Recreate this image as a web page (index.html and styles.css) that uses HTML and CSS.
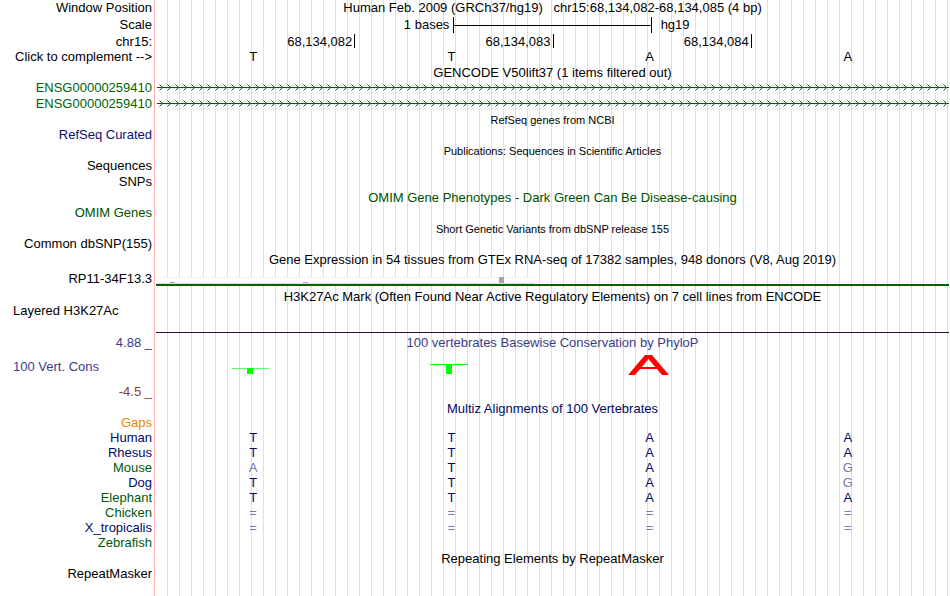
FILE: index.html
```html
<!DOCTYPE html>
<html lang="en">
<head>
    <meta charset="UTF-8">
    <meta name="viewport" content="width=device-width, initial-scale=1.0">
    <title>Human chr15:68,134,082-68,134,085 Genome Browser</title>
    <link rel="stylesheet" href="styles.css">
</head>
<body>
    <main class="browser">
        <!-- Position and ruler -->
        <div class="row ruler">
            <span class="label">Window Position</span>
            <h1 class="position">Human Feb. 2009 (GRCh37/hg19) &nbsp; chr15:68,134,082-68,134,085 (4 bp)</h1>
        </div>
        <div class="row ruler scale-row">
            <span class="label">Scale</span>
            <div class="scale">
                <span class="scale-size">1 bases</span>
                <span class="scale-bar"></span>
                <span class="scale-db">hg19</span>
            </div>
        </div>
        <div class="row ruler">
            <span class="label">chr15:</span>
            <div class="bases ticks">
                <span>68,134,082</span>
                <span>68,134,083</span>
                <span>68,134,084</span>
                <span></span>
            </div>
        </div>
        <div class="row">
            <button type="button" class="label">Click to complement --&gt;</button>
            <div class="bases letters">
                <span>T</span>
                <span>T</span>
                <span>A</span>
                <span>A</span>
            </div>
        </div>

        <!-- GENCODE -->
        <div class="row title">
            <h2>GENCODE V50lift37 (1 items filtered out)</h2>
        </div>
        <div class="row item gene">
            <a class="label" href="#ENSG00000259410">ENSG00000259410</a>
            <svg class="intron" width="100%" height="15">
                <defs>
                    <pattern id="arrows" x="2" width="8" height="15" patternUnits="userSpaceOnUse">
                        <path d="M4 7h1v1h-1zM3 6h1v1h-1zM3 8h1v1h-1zM2 5h1v1h-1zM2 9h1v1h-1z" />
                        <path d="M1 4h1v1h-1zM1 10h1v1h-1z" opacity="0.4" />
                    </pattern>
                </defs>
                <rect x="1" y="7" width="100%" height="1" />
                <rect x="2" width="100%" height="15" fill="url(#arrows)" />
            </svg>
        </div>
        <div class="row item gene">
            <a class="label" href="#ENSG00000259410">ENSG00000259410</a>
            <svg class="intron" width="100%" height="15">
                <rect x="1" y="7" width="100%" height="1" />
                <rect x="2" width="100%" height="15" fill="url(#arrows)" />
            </svg>
        </div>

        <!-- RefSeq -->
        <div class="row title small">
            <h2>RefSeq genes from NCBI</h2>
        </div>
        <div class="row item refseq">
            <span class="label">RefSeq Curated</span>
        </div>

        <!-- Publications -->
        <div class="row title small">
            <h2>Publications: Sequences in Scientific Articles</h2>
        </div>
        <div class="row item">
            <span class="label">Sequences</span>
        </div>
        <div class="row item">
            <span class="label">SNPs</span>
        </div>

        <!-- OMIM -->
        <div class="row title omim">
            <h2>OMIM Gene Phenotypes - Dark Green Can Be Disease-causing</h2>
        </div>
        <div class="row item omim">
            <span class="label">OMIM Genes</span>
        </div>

        <!-- dbSNP -->
        <div class="row title small">
            <h2>Short Genetic Variants from dbSNP release 155</h2>
        </div>
        <div class="row item">
            <span class="label">Common dbSNP(155)</span>
        </div>

        <!-- GTEx -->
        <div class="row title">
            <h2>Gene Expression in 54 tissues from GTEx RNA-seq of 17382 samples, 948 donors (V8, Aug 2019)</h2>
        </div>
        <div class="row gtex">
            <span class="label">RP11-34F13.3</span>
            <svg width="100%" height="21">
                <rect width="378" height="7" y="10" fill="#ffffff" />
                <rect width="378" height="1" y="10" fill="#f2f2f2" />
                <rect width="378" height="1" y="16" fill="#dcdcdc" />
                <rect x="14" y="15" width="5" height="1" fill="#8fbc8f" />
                <rect x="147" y="15" width="5" height="1" fill="#ee82ee" />
                <rect x="343" y="10" width="5" height="6" fill="#a6a6a6" />
                <rect width="100%" height="2" y="17" fill="#006400" />
            </svg>
        </div>

        <!-- H3K27Ac -->
        <div class="row title">
            <h2>H3K27Ac Mark (Often Found Near Active Regulatory Elements) on 7 cell lines from ENCODE</h2>
        </div>
        <div class="row h3k27ac">
            <span class="label left">Layered H3K27Ac</span>
            <div class="baseline"></div>
        </div>

        <!-- Conservation -->
        <div class="row title phylop">
            <span class="label">4.88 _</span>
            <h2>100 vertebrates Basewise Conservation by PhyloP</h2>
        </div>
        <div class="row phylop">
            <div class="axis">
                <span class="label left">100 Vert. Cons</span>
                <span class="label low">-4.5 _</span>
            </div>
            <svg width="100%" height="50" viewBox="0 0 793 50" preserveAspectRatio="none">
                <g fill="#00ff00">
                    <rect x="76" y="18" width="37" height="1" fill="#5cff5c" />
                    <rect x="91" y="18" width="6" height="6" />
                    <rect x="274" y="14" width="38" height="1" />
                    <rect x="290" y="14" width="6" height="10" />
                </g>
                <svg x="472" y="5" width="42" height="20" viewBox="0 0 42 20" stroke="#ff0000">
                    <line x1="-0.75" y1="25" x2="24.75" y2="-5" stroke-width="5.3" />
                    <line x1="41.75" y1="25" x2="16.25" y2="-5" stroke-width="5.3" />
                    <line x1="11" y1="13" x2="31" y2="13" stroke-width="2" />
                </svg>
            </svg>
        </div>

        <!-- Multiz -->
        <div class="row title multiz">
            <h2>Multiz Alignments of 100 Vertebrates</h2>
        </div>
        <table class="alignment">
            <tr class="gaps"><th scope="row">Gaps</th><td></td><td></td><td></td><td></td></tr>
            <tr><th scope="row">Human</th><td>T</td><td>T</td><td>A</td><td>A</td></tr>
            <tr><th scope="row">Rhesus</th><td>T</td><td>T</td><td>A</td><td>A</td></tr>
            <tr class="alt"><th scope="row">Mouse</th><td class="diff">A</td><td>T</td><td>A</td><td class="diff">G</td></tr>
            <tr><th scope="row">Dog</th><td>T</td><td>T</td><td>A</td><td class="diff">G</td></tr>
            <tr class="alt"><th scope="row">Elephant</th><td>T</td><td>T</td><td>A</td><td>A</td></tr>
            <tr class="alt"><th scope="row">Chicken</th><td class="diff">=</td><td class="diff">=</td><td class="diff">=</td><td class="diff">=</td></tr>
            <tr><th scope="row">X_tropicalis</th><td class="diff">=</td><td class="diff">=</td><td class="diff">=</td><td class="diff">=</td></tr>
            <tr class="alt"><th scope="row">Zebrafish</th><td></td><td></td><td></td><td></td></tr>
        </table>

        <!-- RepeatMasker -->
        <div class="row title">
            <h2>Repeating Elements by RepeatMasker</h2>
        </div>
        <div class="row item">
            <span class="label">RepeatMasker</span>
        </div>
    </main>
</body>
</html>
```
FILE: styles.css
```css
/* Global Styles */
* {
    box-sizing: border-box;
}

body {
    margin: 0;
    background-color: #ffffff;
    color: #000000;
    font-family: "Liberation Sans", Arial, Helvetica, sans-serif;
    font-size: 13px;
    line-height: 14px;
}

h1,
h2 {
    margin: 0;
    font-size: inherit;
    font-weight: normal;
    text-align: center;
}

svg {
    display: block;
}

/* Browser image, with the guidelines behind the tracks */
.browser {
    min-height: 100vh;
    padding-right: 1px;
    background-image:
        linear-gradient(#ffb4b4, #ffb4b4),
        repeating-linear-gradient(to right, transparent 0, transparent 11px, #dcdcf5 11px, #dcdcf5 12px);
    background-position: 154px 0, 156px 0;
    background-size: 1px 100%, 100% 100%;
    background-repeat: no-repeat;
}

.row {
    display: grid;
    grid-template-columns: 156px 1fr;
}

.label {
    padding: 0 4px 0 0;
    border: none;
    background: none;
    color: inherit;
    font: inherit;
    text-align: right;
    text-decoration: none;
    white-space: nowrap;
}

button.label {
    cursor: pointer;
}

.label.left {
    padding-left: 13px;
    text-align: left;
}

/* Ruler */
.ruler {
    line-height: 16px;
}

.scale-row {
    padding-top: 1px;
    padding-bottom: 1px;
}

.scale {
    display: grid;
    grid-template-columns: 1fr 25% 1fr;
}

.scale-size {
    padding-right: 4px;
    text-align: right;
}

.scale-bar {
    height: 16px;
    border-left: 1px solid #000000;
    border-right: 1px solid #000000;
    background: linear-gradient(#000000, #000000) center / 100% 1px no-repeat;
}

.scale-db {
    padding-left: 9px;
}

.bases {
    display: grid;
    grid-template-columns: repeat(4, 1fr);
}

.ticks span {
    padding-right: 2px;
    text-align: right;
}

.ticks span + span {
    height: 14px;
    border-left: 1px solid #000000;
}

.letters span {
    padding-right: 4px;
    text-align: center;
}

/* Tracks */
.title {
    padding-top: 2px;
}

.title h2 {
    grid-column: 2;
}

.small h2 {
    font-size: 11px;
}

.item {
    height: 15px;
}

.item .label {
    padding-top: 1px;
}

.item + .item {
    margin-top: 1px;
}

.gene {
    color: #006400;
}

.intron {
    fill: #006400;
}

.refseq {
    color: #0c0c78;
}

.omim {
    color: #005000;
}

.gtex .label {
    padding-top: 5px;
}

.baseline {
    height: 29px;
    margin-bottom: 1px;
    border-bottom: 1px solid #2b1230;
}

/* Conservation */
.phylop {
    color: #3c3c8c;
}

.axis {
    display: flex;
    flex-direction: column;
    justify-content: space-between;
    padding: 10px 0 1px;
}

.low {
    color: #8c3c3c;
}

/* Alignment */
.multiz,
.alignment {
    color: #000a64;
}

.alignment {
    width: 100%;
    margin-bottom: -1px;
    table-layout: fixed;
    border-spacing: 0;
}

.alignment th,
.alignment td {
    height: 15px;
    padding: 0 4px 1px 0;
    font-weight: normal;
    text-align: center;
}

.alignment th {
    width: 156px;
    text-align: right;
}

.alignment .gaps th {
    color: #e68a00;
}

.alignment .alt th {
    color: #005a0a;
}

.alignment .diff {
    color: #7878b4;
}
```
